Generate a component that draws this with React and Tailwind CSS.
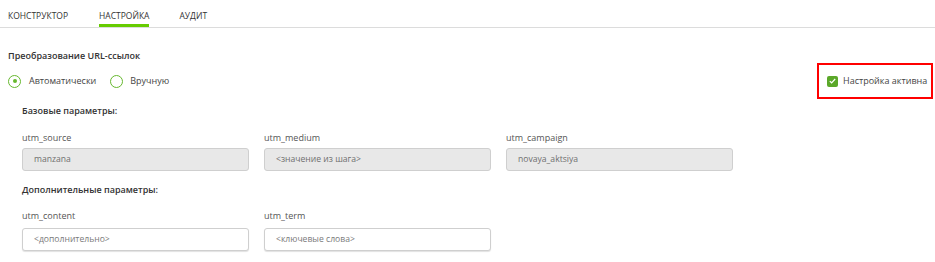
import React from "react";

function Field({ label, value, disabled, gap }) {
  return (
    <div className="w-[227px] flex flex-col">
      <div className="h-[14px] leading-[14px] text-[9px] text-[#555]">{label}</div>
      <div
        className={
          "h-[23px] rounded-[3px] border border-[#cfcfcf] flex items-center pl-[11px] text-[8.6px] " +
          (disabled ? "bg-[#e8e8e8] text-[#6f6f6f]" : "bg-white text-[#7a7a7a] shadow-[0_1px_1px_rgba(0,0,0,0.12)]")
        }
        style={{ marginTop: gap }}
      >
        {value}
      </div>
    </div>
  );
}

export default function App() {
  return (
    <div className="w-[935px] h-[262px] bg-white overflow-hidden" style={{ fontFamily: '"Open Sans", "Noto Sans", sans-serif' }}>
      <div className="h-[28px] border-b border-[#dcdcdc] flex items-end pl-[8px] text-[8.5px] text-[#333]">
        <div className="h-[27px] pt-[9px] leading-[14px]">КОНСТРУКТОР</div>
        <div className="h-[27px] pt-[9px] leading-[14px] ml-[31px] border-b-[3px] border-[#66cc00]">НАСТРОЙКА</div>
        <div className="h-[27px] pt-[9px] leading-[14px] ml-[30px]">АУДИТ</div>
      </div>
      <div className="pl-[8px] pt-[21px] text-[#333]">
        <div className="h-[14px] leading-[14px] text-[9px] font-semibold">Преобразование URL-ссылок</div>
        <div className="relative mt-[11px] h-[14px] flex items-center text-[9px]">
          <span className="w-[13px] h-[13px] rounded-full border-[1.5px] border-[#66b82e] flex items-center justify-center">
            <span className="w-[4px] h-[4px] rounded-full bg-[#66b82e]" />
          </span>
          <span className="ml-[8px] text-[#444]">Автоматически</span>
          <span className="ml-[14px] w-[13px] h-[13px] rounded-full border-[1.5px] border-[#66b82e]" />
          <span className="ml-[7px] text-[#444]">Вручную</span>
          <div className="absolute right-[2px] top-[-11px] w-[116px] h-[36px] border-2 border-[#ff0000] flex items-center pl-[8px] whitespace-nowrap">
            <span className="w-[11px] h-[11px] rounded-[2px] bg-[#5ba829] flex items-center justify-center">
              <svg width="7" height="6" viewBox="0 0 7 6" fill="none">
                <path d="M0.8 3.1 L2.6 4.8 L6.2 1" stroke="white" strokeWidth="1.2" />
              </svg>
            </span>
            <span className="ml-[5px] text-[9px] text-[#444]">Настройка активна</span>
          </div>
        </div>
        <div className="pl-[14px]">
          <div className="mt-[16px] h-[14px] leading-[14px] text-[9px] font-semibold">Базовые параметры:</div>
          <div className="mt-[13px] flex gap-[15px]">
            <Field label="utm_source" value="manzana" disabled gap={3} />
            <Field label="utm_medium" value="<значение из шага>" disabled gap={3} />
            <Field label="utm_campaign" value="novaya_aktsiya" disabled gap={3} />
          </div>
          <div className="mt-[12px] h-[14px] leading-[14px] text-[9px] font-semibold">Дополнительные параметры:</div>
          <div className="mt-[12px] flex gap-[15px]">
            <Field label="utm_content" value="<дополнительно>" gap={5} />
            <Field label="utm_term" value="<ключевые слова>" gap={5} />
          </div>
        </div>
      </div>
    </div>
  );
}
